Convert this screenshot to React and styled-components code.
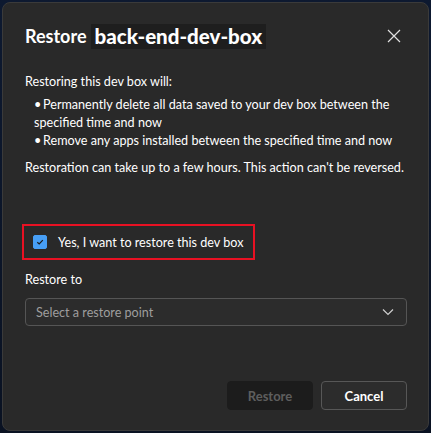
import React, { useState } from 'react';
import styled, { createGlobalStyle } from 'styled-components';

const GlobalStyle = createGlobalStyle`
  html, body {
    margin: 0;
    padding: 0;
    background: #0c1424;
  }
  body {
    font-family: Lato, 'Open Sans', sans-serif;
  }
`;

const Backdrop = styled.div`
  width: 431px;
  height: 433px;
  padding: 2px;
  box-sizing: border-box;
  background: linear-gradient(180deg, #0d1930 0%, #0a1222 100%);
`;

const Dialog = styled.div`
  height: 100%;
  box-sizing: border-box;
  background: #292929;
  border: 1px solid #3a3a3a;
  border-radius: 8px;
  padding: 20px 20px 20px 22px;
  display: flex;
  flex-direction: column;
  color: #ffffff;
`;

const Header = styled.div`
  display: flex;
  align-items: center;
  justify-content: space-between;
`;

const Title = styled.h2`
  margin: 0;
  font-size: 18px;
  font-weight: 700;
  display: flex;
  align-items: center;
  gap: 4px;
  line-height: 26px;
`;

const Code = styled.span`
  background: #1e1e1e;
  padding: 0 4px;
  font-size: 20.5px;
  font-weight: 900;
  line-height: 25px;
`;

const CloseButton = styled.button`
  background: none;
  border: none;
  padding: 0;
  margin-right: 4px;
  width: 20px;
  height: 20px;
  display: flex;
  align-items: center;
  justify-content: center;
  cursor: pointer;
`;

const Text = styled.p`
  margin: ${(p) => p.$mt || 0}px 0 0;
  font-size: 12.6px;
  line-height: 18px;
  color: #ffffff;
  white-space: nowrap;
`;

const Bullets = styled.ul`
  margin: 5px 0 0;
  padding: 0 0 0 9px;
  list-style: none;
  font-size: 12.6px;
  line-height: 18px;
`;

const Bullet = styled.li`
  &::before {
    content: '•';
    display: inline-block;
    width: 9px;
  }
`;

const ConfirmBox = styled.label`
  margin-top: 47px;
  margin-left: -3px;
  width: 233px;
  height: 36px;
  box-sizing: border-box;
  border: 2px solid #e81123;
  display: flex;
  align-items: center;
  gap: 11px;
  padding-left: 9px;
  font-size: 12.6px;
  white-space: nowrap;
  cursor: pointer;
`;

const Check = styled.span`
  width: 14px;
  height: 14px;
  border-radius: 2px;
  background: ${(p) => (p.$on ? '#479ef5' : 'transparent')};
  border: 1px solid ${(p) => (p.$on ? '#479ef5' : '#8a8a8a')};
  box-sizing: border-box;
  display: flex;
  align-items: center;
  justify-content: center;
`;

const FieldLabel = styled.div`
  margin-top: 11px;
  font-size: 12.6px;
  line-height: 18px;
`;

const Select = styled.div`
  margin-top: 9px;
  margin-right: 1px;
  height: 28px;
  box-sizing: border-box;
  border: 1px solid #555555;
  border-radius: 4px;
  background: #2c2c2c;
  display: flex;
  align-items: center;
  justify-content: space-between;
  padding: 0 12px 0 10px;
  font-size: 12.6px;
  color: #9e9e9e;
`;

const Footer = styled.div`
  margin-top: auto;
  margin-right: 1px;
  display: flex;
  justify-content: flex-end;
  gap: 8px;
`;

const Button = styled.button`
  width: 86px;
  height: 29px;
  border-radius: 4px;
  font-family: inherit;
  font-size: 13px;
  font-weight: 700;
  cursor: pointer;
  background: ${(p) => (p.$muted ? '#1c1c1c' : '#2c2c2c')};
  color: ${(p) => (p.$muted ? '#5e5e5e' : '#ffffff')};
  border: 1px solid ${(p) => (p.$muted ? '#1c1c1c' : '#575757')};
`;

export default function App() {
  const [checked, setChecked] = useState(true);

  return (
    <>
      <GlobalStyle />
      <Backdrop>
        <Dialog>
          <Header>
            <Title>
              Restore <Code>back-end-dev-box</Code>
            </Title>
            <CloseButton aria-label="Close">
              <svg width="14" height="14" viewBox="0 0 14 14">
                <path d="M1 1 L13 13 M13 1 L1 13" stroke="#e0e0e0" strokeWidth="1.2" />
              </svg>
            </CloseButton>
          </Header>
          <Text $mt={24}>Restoring this dev box will:</Text>
          <Bullets>
            <Bullet>Permanently delete all data saved to your dev box between the specified time and now</Bullet>
            <Bullet>Remove any apps installed between the specified time and now</Bullet>
          </Bullets>
          <Text $mt={9}>Restoration can take up to a few hours. This action can't be reversed.</Text>
          <ConfirmBox onClick={() => setChecked(!checked)}>
            <Check $on={checked}>
              {checked && (
                <svg width="10" height="10" viewBox="0 0 10 10">
                  <path d="M2.3 5.2 L4.2 7 L7.8 3.2" stroke="#1a1a1a" strokeWidth="1.2" fill="none" />
                </svg>
              )}
            </Check>
            Yes, I want to restore this dev box
          </ConfirmBox>
          <FieldLabel>Restore to</FieldLabel>
          <Select>
            Select a restore point
            <svg width="12" height="8" viewBox="0 0 12 8">
              <path d="M1 1.5 L6 6.5 L11 1.5" stroke="#cfcfcf" strokeWidth="1.2" fill="none" />
            </svg>
          </Select>
          <Footer>
            <Button $muted disabled>Restore</Button>
            <Button>Cancel</Button>
          </Footer>
        </Dialog>
      </Backdrop>
    </>
  );
}
